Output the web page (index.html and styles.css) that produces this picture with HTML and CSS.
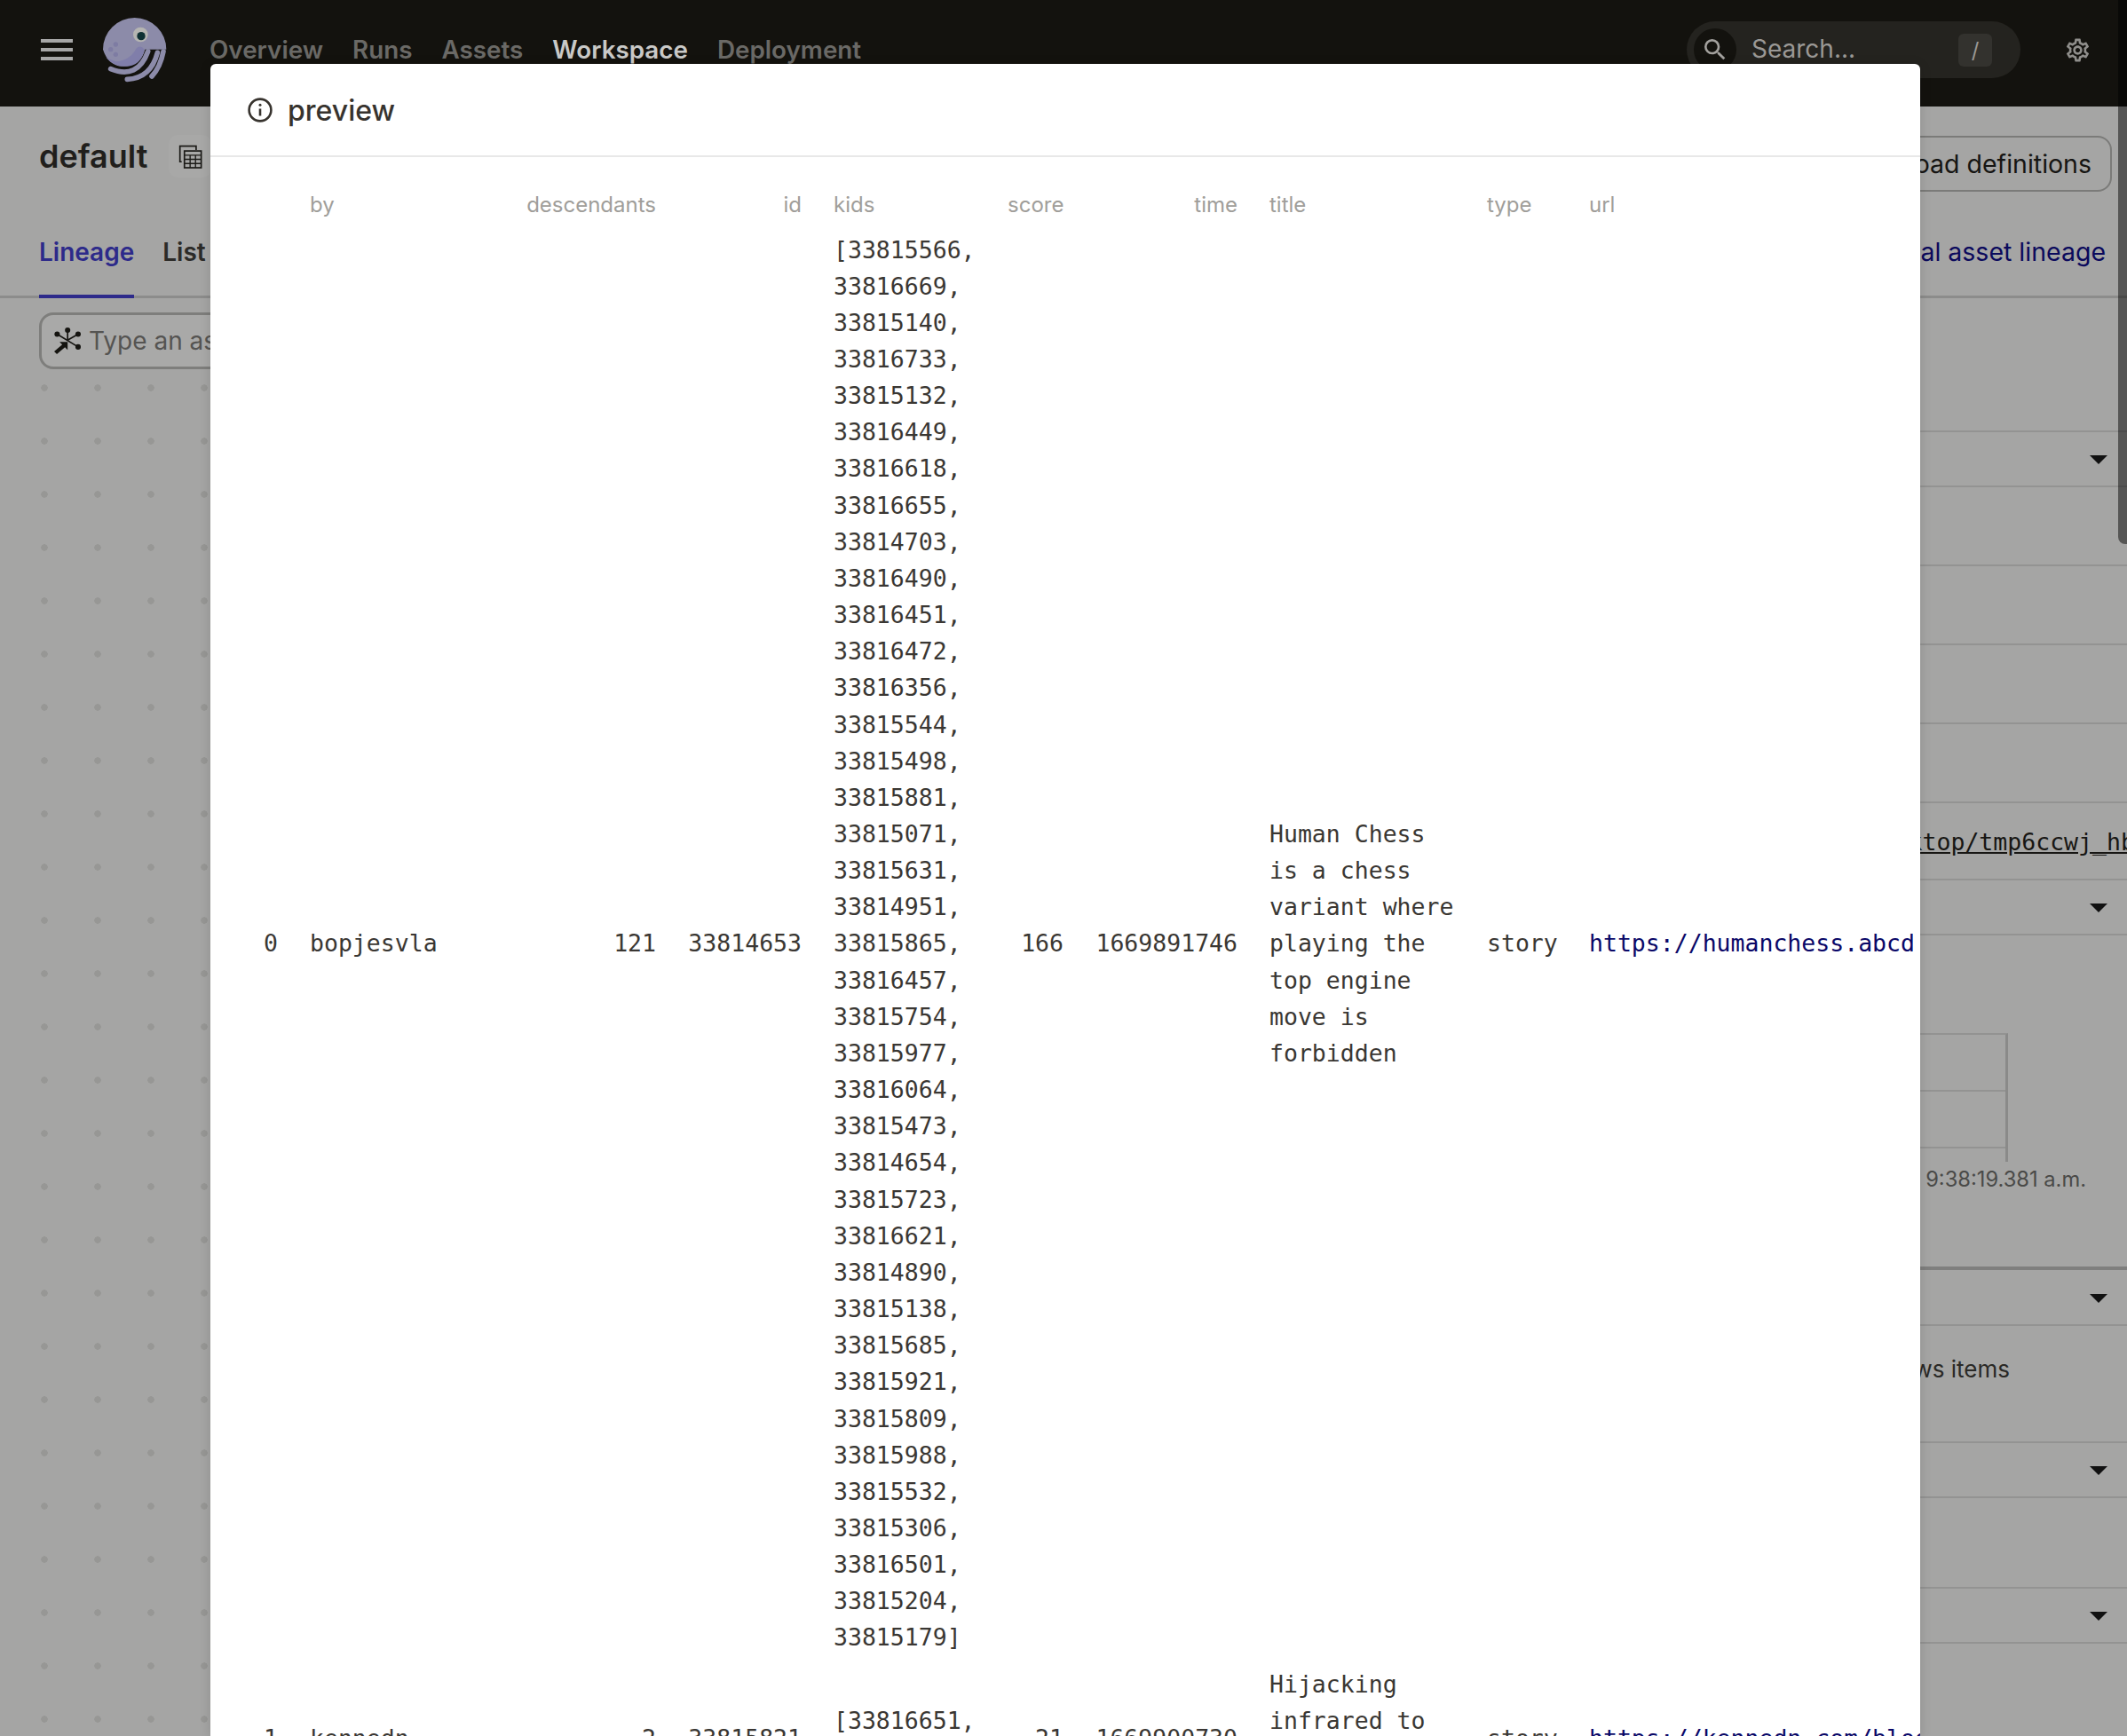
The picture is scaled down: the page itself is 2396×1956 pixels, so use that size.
FILE: index.html
```html
<!DOCTYPE html>
<html lang="en">

<head>
    <meta charset="UTF-8">
    <title>default - Lineage</title>
    <link rel="stylesheet" href="styles.css">
</head>

<body>
    <header class="nav">
        <div class="burger"><span></span><span></span><span></span></div>
        <svg class="logo" viewBox="255 55 225 225" width="75" height="75">
            <path d="M258 165A107 107 0 1 1 472 165L400 165Q385 225 320 222Q275 218 258 165Z" fill="#8c8ba9"/>
            <path d="M268 192Q295 222 330 222Q385 225 398 165Q385 148 370 162Q350 202 300 206Z" fill="#807eaa"/>
            <g fill="none" stroke="#8c8ba9" stroke-width="17" stroke-linecap="round">
                <path d="M284 231Q375 268 410 172"/>
                <path d="M340 266Q420 262 442 176"/>
                <path d="M423 256Q452 225 462 172"/>
            </g>
            <g fill="#7e7ca3">
                <circle cx="284" cy="165" r="8"/>
                <circle cx="301" cy="148" r="8"/>
                <circle cx="301" cy="182" r="8"/>
            </g>
            <circle cx="385" cy="115" r="25" fill="#b5b5b2"/>
            <circle cx="387" cy="120" r="14" fill="#0e3033"/>
        </svg>
        <nav class="nav-links">
            <a>Overview</a>
            <a>Runs</a>
            <a>Assets</a>
            <a class="active">Workspace</a>
            <a>Deployment</a>
        </nav>
        <div class="search">
            <span class="search-icon">
                <svg viewBox="0 0 24 24" width="32" height="32"><path fill="#a3a19e" d="M15.5 14h-.79l-.28-.27A6.471 6.471 0 0 0 16 9.5 6.5 6.5 0 1 0 9.5 16c1.61 0 3.09-.59 4.23-1.57l.27.28v.79l5 4.99L20.49 19l-4.99-5zm-6 0C7.01 14 5 11.99 5 9.5S7.01 5 9.5 5 14 7.01 14 9.5 11.99 14 9.5 14z"/></svg>
            </span>
            <span class="search-text">Search...</span>
            <span class="search-key">/</span>
        </div>
        <svg class="gear" viewBox="0 0 24 24" width="31" height="31"><path fill="#8f8e8b" d="M19.43 12.98c.04-.32.07-.64.07-.98 0-.34-.03-.66-.07-.98l2.11-1.65c.19-.15.24-.42.12-.64l-2-3.46c-.09-.16-.26-.25-.44-.25-.06 0-.12.01-.17.03l-2.49 1c-.52-.4-1.08-.73-1.69-.98l-.38-2.65C14.46 2.18 14.25 2 14 2h-4c-.25 0-.46.18-.49.42l-.38 2.65c-.61.25-1.17.59-1.69.98l-2.49-1c-.06-.02-.12-.03-.18-.03-.17 0-.34.09-.43.25l-2 3.46c-.13.22-.07.49.12.64l2.11 1.65c-.04.32-.07.65-.07.98 0 .33.03.66.07.98l-2.11 1.65c-.19.15-.24.42-.12.64l2 3.46c.09.16.26.25.44.25.06 0 .12-.01.17-.03l2.49-1c.52.4 1.08.73 1.69.98l.38 2.65c.03.24.24.42.49.42h4c.25 0 .46-.18.49-.42l.38-2.65c.61-.25 1.17-.59 1.69-.98l2.49 1c.06.02.12.03.18.03.17 0 .34-.09.43-.25l2-3.46c.12-.22.07-.49-.12-.64l-2.11-1.65zm-1.98-1.71c.04.31.05.52.05.73 0 .21-.02.43-.05.73l-.14 1.13.89.7 1.08.84-.7 1.21-1.27-.51-1.04-.42-.9.68c-.43.32-.84.56-1.25.73l-1.06.43-.16 1.13-.2 1.35h-1.4l-.19-1.35-.16-1.13-1.06-.43c-.43-.18-.83-.41-1.23-.71l-.91-.7-1.06.43-1.27.51-.7-1.21 1.08-.84.89-.7-.14-1.13c-.03-.31-.05-.54-.05-.74s.02-.43.05-.73l.14-1.13-.89-.7-1.08-.84.7-1.21 1.27.51 1.04.42.9-.68c.43-.32.84-.56 1.25-.73l1.06-.43.16-1.13.2-1.35h1.39l.19 1.35.16 1.13 1.06.43c.43.18.83.41 1.23.71l.91.7 1.06-.43 1.27-.51.7 1.21-1.07.85-.89.7.14 1.13zM12 8c-2.21 0-4 1.79-4 4s1.79 4 4 4 4-1.79 4-4-1.79-4-4-4zm0 6c-1.1 0-2-.9-2-2s.9-2 2-2 2 .9 2 2-.9 2-2 2z"/></svg>
    </header>

    <section class="page-head">
        <div class="title-group">
            <h1>default</h1>
            <span class="chip">
                <svg viewBox="515 67 80 80" width="27" height="27" fill="none" stroke="#1b1a17" stroke-width="5">
                    <path d="M526 124H520V72H574V85"/>
                    <rect x="535" y="88" width="56" height="56"/>
                    <path d="M535 102H591M535 116H591M535 130H591M554 102V144M572 102V144" stroke-width="4"/>
                </svg>
            </span>
        </div>
        <button class="reload">Reload definitions</button>
    </section>

    <div class="tabs">
        <div class="tab-list">
            <a class="tab active">Lineage</a>
            <a class="tab">List</a>
        </div>
        <a class="global-link">View global asset lineage</a>
    </div>

    <main class="content">
        <div class="canvas">
            <div class="asset-input">
                <svg viewBox="180 85 95 95" width="32" height="32" fill="none" stroke="#151410" stroke-width="5">
                    <path d="M228 97V130M193 110L263 153M263 110L228 130"/>
                    <g fill="#151410" stroke="none">
                        <circle cx="228" cy="97" r="9"/>
                        <circle cx="193" cy="110" r="9"/>
                        <circle cx="263" cy="110" r="9"/>
                        <circle cx="263" cy="153" r="9"/>
                        <path d="M201 136H228V163L219 154L192 177L183 168L210 145Z"/>
                    </g>
                </svg>
                <span>Type an asset subset...</span>
            </div>
        </div>

        <aside class="panel">
            <div class="row row-top"></div>
            <div class="row row-head"><i class="caret"></i></div>
            <div class="row row-prop"></div>
            <div class="row row-prop"></div>
            <div class="row row-prop"></div>
            <div class="row row-prop"></div>
            <div class="row row-path"><a>/home/Desktop/tmp6ccwj_hbkp/hackernews_top</a></div>
            <div class="row row-head"><i class="caret"></i></div>
            <div class="row row-meta">
                <div class="mini-table">
                    <div class="mini-row"></div>
                    <div class="mini-row"></div>
                </div>
                <p class="meta-time">Dec 1, 2022, 9:38:19.381 a.m.</p>
            </div>
            <div class="row row-head row-thick"><i class="caret"></i></div>
            <div class="row row-desc">Top Hacker News items</div>
            <div class="row row-head"><i class="caret"></i></div>
            <div class="row row-blank"></div>
            <div class="row row-head"><i class="caret"></i></div>
        </aside>
    </main>

    <div class="scroll-thumb"></div>

    <div class="modal">
        <div class="modal-head">
            <svg viewBox="0 0 28 28" width="28" height="28" fill="none" stroke="#37332e" stroke-width="2.6">
                <circle cx="14" cy="14" r="12.4"/>
                <path d="M14 12.5V20.5"/>
                <circle cx="14" cy="8.2" r="1.5" fill="#37332e" stroke="none"/>
            </svg>
            <span class="modal-title">preview</span>
        </div>
        <div class="modal-body">
            <table class="preview">
                <thead>
                    <tr>
                        <th></th>
                        <th>by</th>
                        <th class="num">descendants</th>
                        <th class="num">id</th>
                        <th>kids</th>
                        <th class="num">score</th>
                        <th class="num">time</th>
                        <th>title</th>
                        <th>type</th>
                        <th>url</th>
                    </tr>
                </thead>
                <tbody>
                    <tr>
                        <td class="num">0</td>
                        <td>bopjesvla</td>
                        <td class="num">121</td>
                        <td class="num">33814653</td>
                        <td>[33815566, 33816669, 33815140, 33816733, 33815132, 33816449, 33816618, 33816655, 33814703, 33816490, 33816451, 33816472, 33816356, 33815544, 33815498, 33815881, 33815071, 33815631, 33814951, 33815865, 33816457, 33815754, 33815977, 33816064, 33815473, 33814654, 33815723, 33816621, 33814890, 33815138, 33815685, 33815921, 33815809, 33815988, 33815532, 33815306, 33816501, 33815204, 33815179]</td>
                        <td class="num">166</td>
                        <td class="num">1669891746</td>
                        <td>Human Chess is a chess variant where playing the top engine move is forbidden</td>
                        <td>story</td>
                        <td class="url"><a>https://humanchess.abcd</a></td>
                    </tr>
                    <tr>
                        <td class="num">1</td>
                        <td>kennedn</td>
                        <td class="num">2</td>
                        <td class="num">33815821</td>
                        <td>[33816651, 33816007]</td>
                        <td class="num">21</td>
                        <td class="num">1669900730</td>
                        <td>Hijacking infrared to control my heat pump</td>
                        <td>story</td>
                        <td class="url"><a>https://kennedn.com/blog/posts/heatpump</a></td>
                    </tr>
                </tbody>
            </table>
        </div>
    </div>
</body>

</html>
```

FILE: styles.css
```css
* {
    box-sizing: border-box;
}

html,
body {
    margin: 0;
    height: 1956px;
    overflow: hidden;
}

body {
    position: relative;
    font-family: Inter, "Liberation Sans", sans-serif;
    background: #a5a5a4;
    color: #1b1a17;
}

/* top bar */
.nav {
    display: flex;
    align-items: center;
    height: 120px;
    padding: 0 40px 8px 46px;
    background: #13120e;
}

.burger {
    display: flex;
    flex-direction: column;
    gap: 6px;
    width: 36px;
}

.burger span {
    height: 4px;
    background: #a6a6a6;
}

.logo {
    margin-left: 33px;
}

.nav-links {
    display: flex;
    gap: 33px;
    margin-left: 46px;
    font-size: 27.8px;
    font-weight: 600;
}

.nav-links a {
    color: #6a6966;
}

.nav-links a.active {
    color: #c9c9c7;
}

.search {
    display: flex;
    align-items: center;
    width: 376px;
    height: 64px;
    margin-left: auto;
    padding: 0 32px 0 8px;
    border-radius: 32px;
    background: #24231f;
}

.search-icon {
    display: flex;
    align-items: center;
    justify-content: center;
    width: 48px;
    height: 48px;
    border-radius: 50%;
    background: #13120e;
}

.search-text {
    margin-bottom: 2px;
    margin-left: 17px;
    font-size: 28px;
    color: #9a9895;
}

.search-key {
    width: 38px;
    height: 37px;
    margin-left: auto;
    border-radius: 6px;
    background: #33322e;
    font-size: 24px;
    line-height: 37px;
    text-align: center;
    color: #9a9895;
}

.gear {
    margin-left: 49px;
}

/* page heading */
.page-head {
    display: flex;
    align-items: center;
    justify-content: space-between;
    height: 112px;
    padding: 0 17px 0 44px;
}

.title-group {
    display: flex;
    align-items: center;
}

.page-head h1 {
    margin: 0;
    font-size: 36px;
    font-weight: 600;
    color: #211f1c;
}

.chip {
    display: flex;
    align-items: center;
    justify-content: center;
    width: 48px;
    height: 48px;
    margin-left: 24px;
    border-radius: 10px;
    background: #a8a8a7;
}

.reload {
    height: 63px;
    margin-top: 16px;
    padding: 0 21px 0 24px;
    border: 2px solid #7b7b79;
    border-radius: 16px;
    background: none;
    font-family: inherit;
    font-size: 28.5px;
    color: #161513;
}

.tabs {
    display: flex;
    align-items: center;
    justify-content: space-between;
    height: 104px;
    padding-right: 24px;
    padding-left: 44px;
    border-bottom: 3px solid #8c8c8b;
}

.tab-list {
    display: flex;
    gap: 32px;
    align-self: stretch;
}

.tab {
    display: flex;
    align-items: center;
    height: 104px;
    padding-top: 4px;
    border-bottom: 4px solid transparent;
    font-size: 28px;
    font-weight: 600;
    color: #2c2b28;
}

.tab.active {
    border-bottom-color: #2d2a8a;
    color: #2d2a8a;
}

.global-link {
    margin-top: 2px;
    font-size: 28.5px;
    color: #0b0a5c;
}

/* canvas and side panel */
.content {
    display: flex;
    height: 1620px;
}

.canvas {
    flex: 1;
    padding: 16px 44px;
    background-image: radial-gradient(circle, #979795 3.5px, transparent 4px);
    background-position: 20px 71px;
    background-size: 60px 60px;
}

.asset-input {
    display: flex;
    align-items: center;
    gap: 8px;
    width: 500px;
    height: 64px;
    padding-left: 13px;
    border: 3px solid #7e7e7c;
    border-radius: 16px;
    background: #a9a9a8;
    font-size: 28px;
    color: #555452;
}

.panel {
    width: 456px;
    font-size: 26px;
}

.row {
    position: relative;
    border-bottom: 2px solid #939392;
}

.row-top {
    height: 151px;
}

.row-head {
    height: 62px;
}

.row-prop {
    height: 89px;
}

.row-path {
    height: 87px;
    padding-left: 66px;
    font-family: "DejaVu Sans Mono", monospace;
    font-size: 26.5px;
    line-height: 88px;
    white-space: nowrap;
    overflow: hidden;
    color: #171613;
}

.row-path a {
    text-decoration: underline;
}

.row-meta {
    height: 373px;
    padding-top: 110px;
    border-bottom: 0;
}

.mini-table {
    width: 322px;
    padding-bottom: 15px;
    border-top: 2px solid #939392;
    border-right: 3px solid #8a8a89;
}

.mini-row {
    height: 64px;
    border-bottom: 2px solid #939392;
}

.meta-time {
    margin: 5px 46px 0 0;
    font-size: 23.7px;
    line-height: 30px;
    text-align: right;
    color: #4a4a48;
}

.row-thick {
    height: 67px;
    border-top: 4px solid #7f7f7e;
}

.row-desc {
    height: 132px;
    padding-top: 34px;
    padding-right: 132px;
    line-height: 30px;
    text-align: right;
    color: #2a2926;
}

.row-blank {
    height: 102px;
}

.caret {
    position: absolute;
    top: 50%;
    right: 22px;
    margin-top: -4px;
    border-top: 10px solid #111;
    border-right: 10px solid transparent;
    border-left: 10px solid transparent;
}

.scroll-thumb {
    position: absolute;
    top: 0;
    right: 0;
    width: 10px;
    height: 613px;
    border-bottom-left-radius: 8px;
    background: rgba(0, 0, 0, 0.48);
}

/* preview dialog */
.modal {
    position: absolute;
    top: 72px;
    left: 237px;
    width: 1926px;
    height: 1884px;
    overflow: hidden;
    border-radius: 6px 6px 0 0;
    background: #fff;
    box-shadow: 0 2px 14px rgba(0, 0, 0, 0.14);
}

.modal-head {
    display: flex;
    align-items: center;
    gap: 17px;
    height: 105px;
    padding-left: 42px;
    border-bottom: 2px solid #e8e8e8;
    font-size: 32px;
    font-weight: 500;
    color: #37332e;
}

.modal-title {
    margin-top: 2px;
}

.modal-body {
    padding: 30px 0 0 42px;
}

.preview {
    table-layout: fixed;
    width: 1770px;
    border-collapse: collapse;
    font-family: "DejaVu Sans Mono", monospace;
    font-size: 26.5px;
    line-height: 41.15px;
    color: #3a3733;
}

.preview th {
    height: 48px;
    padding: 0 18px;
    font-family: Inter, "Liberation Sans", sans-serif;
    font-size: 24px;
    font-weight: 400;
    text-align: left;
    color: #a09e9a;
}

.preview td {
    padding: 5.5px 18px;
    vertical-align: middle;
}

.preview th.num,
.preview td.num {
    text-align: right;
}

.preview th:nth-child(1) { width: 52px; }
.preview th:nth-child(2) { width: 244px; }
.preview th:nth-child(3) { width: 182px; }
.preview th:nth-child(4) { width: 164px; }
.preview th:nth-child(5) { width: 196px; }
.preview th:nth-child(6) { width: 99px; }
.preview th:nth-child(7) { width: 196px; }
.preview th:nth-child(8) { width: 245px; }
.preview th:nth-child(9) { width: 115px; }
.preview th:nth-child(10) { width: 777px; }

.preview .url {
    white-space: nowrap;
    color: #0a0868;
}
```
